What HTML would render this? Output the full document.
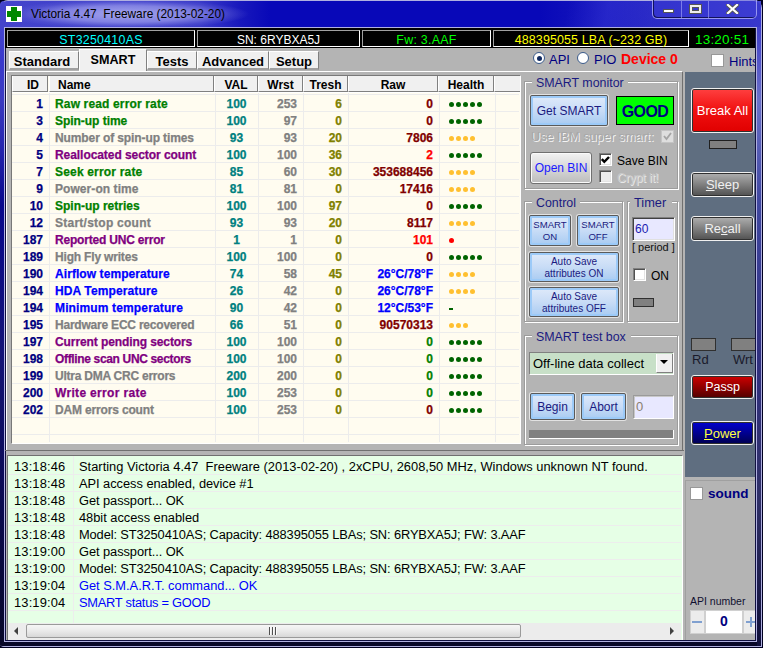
<!DOCTYPE html>
<html><head><meta charset="utf-8"><style>
html,body{margin:0;padding:0;}
body{width:763px;height:648px;overflow:hidden;position:relative;background:#000020;font-family:"Liberation Sans",sans-serif;}
div,svg{position:absolute;}
.t{white-space:nowrap;line-height:16px;}
.gb{font-weight:bold;font-size:12px;-webkit-text-stroke:0.25px currentColor;}
.frame{left:0;top:0;width:762px;height:647px;border-radius:8px 8px 0 4px;background:#b0b0e0;}
.lstrip{left:0;top:1px;width:4px;height:645px;border-radius:7px 0 0 3px;background:linear-gradient(#4a4ad0 0px,#3a3acc 60px,#3a3ac0 100px,#2828b0 144px,#08088c 204px,#141478 350px,#0a0a50 504px,#080828 645px);}
.rstrip{left:757px;top:1px;width:4px;height:645px;background:linear-gradient(#4646d0 0px,#4040c8 40px,#6a70c8 100px,#4048a0 200px,#303080 350px,#303068 500px,#10103a 645px);}
.bstrip{left:3px;top:642px;width:755px;height:4px;background:#080828;}
.tbar{left:0;top:1px;width:761px;height:26px;border-radius:7px 7px 0 0;background:linear-gradient(90deg,#4444cc 0px,#3a3ac8 200px,#1818bc 240px,#0808b8 270px,#0808b8 540px,#1414bc 590px,#2a2ac6 650px,#3838cc 761px);}
.glow{left:0;top:1px;width:300px;height:26px;background:radial-gradient(ellipse 122px 15px at 127px 13px, rgba(175,175,240,.9) 0%, rgba(145,145,232,.8) 55%, rgba(100,100,215,.35) 85%, rgba(90,90,210,0) 100%);}
.streak{left:0;top:1px;width:761px;height:26px;background:linear-gradient(100deg, rgba(0,0,0,0) 560px, rgba(60,60,220,.35) 600px, rgba(0,0,0,0) 650px);}
.capgrp{left:652px;top:-1px;width:105px;height:20px;border:1px solid rgba(190,190,255,.7);border-radius:0 0 5px 5px;box-sizing:border-box;background:rgba(70,70,220,.35);box-shadow:inset 1px -1px 0 rgba(10,10,60,.8);}
.radio{width:12px;height:12px;border-radius:50%;background:#fff;border:1px solid #3a5a8a;box-sizing:border-box;}
.radio .dot{left:2.5px;top:2.5px;width:5px;height:5px;border-radius:50%;background:#102a60;}
</style></head><body>
<div class="frame"></div>
<div class="lstrip"></div>
<div class="rstrip"></div>
<div class="bstrip"></div>
<div class="tbar"></div>
<div class="glow"></div>
<div class="streak"></div>
<div class="" style="left:6px;top:6px;width:16px;height:16px;background:#fff;"></div>
<div class="" style="left:11px;top:7px;width:6px;height:14px;background:#008800;"></div>
<div class="" style="left:7px;top:11px;width:14px;height:6px;background:#008800;"></div>
<div class="t" style="left:31px;top:6px;font-size:11.85px;color:#000;white-space:nowrap;">Victoria 4.47&nbsp; Freeware (2013-02-20)</div>
<div class="capgrp"></div>
<div class="" style="left:681px;top:1px;width:1px;height:17px;background:rgba(180,180,255,.55);"></div>
<div class="" style="left:708px;top:1px;width:1px;height:17px;background:rgba(180,180,255,.55);"></div>
<div class="" style="left:663px;top:9px;width:11px;height:4px;background:#fff;border:1px solid #555;box-sizing:border-box;"></div>
<div class="" style="left:690px;top:5px;width:11px;height:8px;border:2px solid #eee;box-shadow:0 0 0 1px #555, inset 0 0 0 1px #555;box-sizing:border-box;"></div>
<svg class="a" style="left:726px;top:4px" width="13" height="10" viewBox="0 0 13 10"><path d="M2 1 L11 9 M11 1 L2 9" stroke="#555" stroke-width="4" stroke-linecap="square"/><path d="M2 1 L11 9 M11 1 L2 9" stroke="#fff" stroke-width="2.2" stroke-linecap="square"/></svg>
<div class="" style="left:4px;top:27px;width:753px;height:615px;background:#b0b0e0;"></div>
<div class="" style="left:5px;top:28px;width:751px;height:613px;background:#101040;"></div>
<div class="" style="left:6px;top:29px;width:749px;height:611px;background:#b4b4b4;"></div>
<div class="" style="left:5px;top:28px;width:751px;height:20px;background:#000;"></div>
<div class="" style="left:7px;top:30px;width:188px;height:17px;background:#000;border-top:1px solid #a0a0a0;border-left:1px solid #a0a0a0;border-right:1px solid #fff;border-bottom:1px solid #fff;box-sizing:border-box;"></div>
<div class="" style="left:197px;top:30px;width:163px;height:17px;background:#000;border-top:1px solid #a0a0a0;border-left:1px solid #a0a0a0;border-right:1px solid #fff;border-bottom:1px solid #fff;box-sizing:border-box;"></div>
<div class="" style="left:362px;top:30px;width:129px;height:17px;background:#000;border-top:1px solid #a0a0a0;border-left:1px solid #a0a0a0;border-right:1px solid #fff;border-bottom:1px solid #fff;box-sizing:border-box;"></div>
<div class="" style="left:493px;top:30px;width:196px;height:17px;background:#000;border-top:1px solid #a0a0a0;border-left:1px solid #a0a0a0;border-right:1px solid #fff;border-bottom:1px solid #fff;box-sizing:border-box;"></div>
<div class="t" style="left:7px;top:32px;width:188px;text-align:center;color:#00ffff;font-size:12.4px;letter-spacing:0.25px;">ST3250410AS</div>
<div class="t" style="left:197px;top:32px;width:163px;text-align:center;color:#fff;font-size:12px;">SN: 6RYBXA5J</div>
<div class="t" style="left:362px;top:32px;width:129px;text-align:center;color:#00ff00;font-size:12.4px;letter-spacing:0.27px;">Fw: 3.AAF</div>
<div class="t" style="left:493px;top:32px;width:196px;text-align:center;color:#ffff00;font-size:12.5px;letter-spacing:0.09px;">488395055 LBA (~232 GB)</div>
<div class="t" style="left:695px;top:32px;color:#00ff00;font-size:13.5px;letter-spacing:0.2px;">13:20:51</div>
<div class="" style="left:9px;top:51px;width:70px;height:19px;background:#f0f0f0;border-left:1px solid #fff;border-top:1px solid #fff;border-right:1px solid #808080;box-sizing:border-box;border-bottom:2px solid #a0a0a0;"></div><div class="t" style="left:7px;top:54px;width:70px;text-align:center;font-weight:bold;font-size:13px;color:#000;">Standard</div>
<div class="" style="left:147px;top:51px;width:50px;height:19px;background:#f0f0f0;border-left:1px solid #fff;border-top:1px solid #fff;border-right:1px solid #808080;box-sizing:border-box;border-bottom:2px solid #a0a0a0;"></div><div class="t" style="left:147px;top:54px;width:50px;text-align:center;font-weight:bold;font-size:13px;color:#000;">Tests</div>
<div class="" style="left:197px;top:51px;width:72px;height:19px;background:#f0f0f0;border-left:1px solid #fff;border-top:1px solid #fff;border-right:1px solid #808080;box-sizing:border-box;border-bottom:2px solid #a0a0a0;"></div><div class="t" style="left:197px;top:54px;width:72px;text-align:center;font-weight:bold;font-size:13px;color:#000;">Advanced</div>
<div class="" style="left:269px;top:51px;width:50px;height:19px;background:#f0f0f0;border-left:1px solid #fff;border-top:1px solid #fff;border-right:1px solid #808080;box-sizing:border-box;border-bottom:2px solid #a0a0a0;"></div><div class="t" style="left:269px;top:54px;width:50px;text-align:center;font-weight:bold;font-size:13px;color:#000;">Setup</div>
<div class="" style="left:79px;top:49px;width:68px;height:23px;background:#f0f0f0;border-left:1px solid #fff;border-top:1px solid #fff;border-right:1px solid #808080;box-sizing:border-box;"></div><div class="t" style="left:79px;top:52px;width:68px;text-align:center;font-weight:bold;font-size:12.6px;color:#000;">SMART</div>
<div class="radio" style="left:533px;top:52px"><div class="dot"></div></div>
<div class="t" style="left:549px;top:52px;font-size:13px;color:#000080;">API</div>
<div class="radio" style="left:577px;top:52px"></div>
<div class="t" style="left:594px;top:52px;font-size:13px;color:#000080;">PIO</div>
<div class="t" style="left:621px;top:51px;font-size:14px;font-weight:bold;color:#ff0000;">Device 0</div>
<div class="" style="left:711px;top:54px;width:13px;height:13px;background:#fff;border:1px solid #989898;box-sizing:border-box;"></div>
<div class="t" style="left:729px;top:54px;font-size:13px;color:#000080;">Hints</div>
<div class="" style="left:6px;top:71px;width:677px;height:380px;border-top:1px solid #fff;border-left:1px solid #fff;border-right:1px solid #707070;border-bottom:1px solid #707070;box-sizing:border-box;"></div>
<div class="" style="left:11px;top:75px;width:510px;height:369px;background:#fffcf0;border-top:1px solid #787878;border-left:1px solid #787878;border-right:1px solid #fff;border-bottom:1px solid #fff;box-sizing:border-box;"></div>
<div class="" style="left:12px;top:76px;width:36px;height:16px;background:#f0f0f0;border-left:1px solid #fff;border-right:1px solid #808080;border-bottom:1px solid #808080;box-sizing:border-box;"></div>
<div class="" style="left:49px;top:76px;width:165px;height:16px;background:#f0f0f0;border-left:1px solid #fff;border-right:1px solid #808080;border-bottom:1px solid #808080;box-sizing:border-box;"></div>
<div class="" style="left:214px;top:76px;width:44px;height:16px;background:#f0f0f0;border-left:1px solid #fff;border-right:1px solid #808080;border-bottom:1px solid #808080;box-sizing:border-box;"></div>
<div class="" style="left:258px;top:76px;width:45px;height:16px;background:#f0f0f0;border-left:1px solid #fff;border-right:1px solid #808080;border-bottom:1px solid #808080;box-sizing:border-box;"></div>
<div class="" style="left:303px;top:76px;width:45px;height:16px;background:#f0f0f0;border-left:1px solid #fff;border-right:1px solid #808080;border-bottom:1px solid #808080;box-sizing:border-box;"></div>
<div class="" style="left:348px;top:76px;width:90px;height:16px;background:#f0f0f0;border-left:1px solid #fff;border-right:1px solid #808080;border-bottom:1px solid #808080;box-sizing:border-box;"></div>
<div class="" style="left:438px;top:76px;width:56px;height:16px;background:#f0f0f0;border-left:1px solid #fff;border-right:1px solid #808080;border-bottom:1px solid #808080;box-sizing:border-box;"></div>
<div class="" style="left:494px;top:76px;width:26px;height:16px;background:#f0f0f0;border-left:1px solid #fff;border-bottom:1px solid #808080;box-sizing:border-box;"></div>
<div class="" style="left:12px;top:92px;width:508px;height:1px;background:#fff;"></div>
<div class="" style="left:12px;top:94px;width:507px;height:1px;background:#ececec;"></div>
<div class="" style="left:12px;top:111px;width:507px;height:1px;background:#ececec;"></div>
<div class="" style="left:12px;top:128px;width:507px;height:1px;background:#ececec;"></div>
<div class="" style="left:12px;top:145px;width:507px;height:1px;background:#ececec;"></div>
<div class="" style="left:12px;top:162px;width:507px;height:1px;background:#ececec;"></div>
<div class="" style="left:12px;top:179px;width:507px;height:1px;background:#ececec;"></div>
<div class="" style="left:12px;top:196px;width:507px;height:1px;background:#ececec;"></div>
<div class="" style="left:12px;top:213px;width:507px;height:1px;background:#ececec;"></div>
<div class="" style="left:12px;top:230px;width:507px;height:1px;background:#ececec;"></div>
<div class="" style="left:12px;top:247px;width:507px;height:1px;background:#ececec;"></div>
<div class="" style="left:12px;top:264px;width:507px;height:1px;background:#ececec;"></div>
<div class="" style="left:12px;top:281px;width:507px;height:1px;background:#ececec;"></div>
<div class="" style="left:12px;top:298px;width:507px;height:1px;background:#ececec;"></div>
<div class="" style="left:12px;top:315px;width:507px;height:1px;background:#ececec;"></div>
<div class="" style="left:12px;top:332px;width:507px;height:1px;background:#ececec;"></div>
<div class="" style="left:12px;top:349px;width:507px;height:1px;background:#ececec;"></div>
<div class="" style="left:12px;top:366px;width:507px;height:1px;background:#ececec;"></div>
<div class="" style="left:12px;top:383px;width:507px;height:1px;background:#ececec;"></div>
<div class="" style="left:12px;top:400px;width:507px;height:1px;background:#ececec;"></div>
<div class="" style="left:12px;top:417px;width:507px;height:1px;background:#ececec;"></div>
<div class="" style="left:12px;top:434px;width:507px;height:1px;background:#ececec;"></div>
<div class="" style="left:49px;top:93px;width:1px;height:349px;background:#ececec;"></div>
<div class="" style="left:215px;top:93px;width:1px;height:349px;background:#ececec;"></div>
<div class="" style="left:258px;top:93px;width:1px;height:349px;background:#ececec;"></div>
<div class="" style="left:303px;top:93px;width:1px;height:349px;background:#ececec;"></div>
<div class="" style="left:348px;top:93px;width:1px;height:349px;background:#ececec;"></div>
<div class="" style="left:439px;top:93px;width:1px;height:349px;background:#ececec;"></div>
<div class="" style="left:495px;top:93px;width:1px;height:349px;background:#ececec;"></div>
<div class="t" style="left:12px;top:77px;width:27px;text-align:right;font-weight:bold;font-size:12px;">ID</div>
<div class="t" style="left:58px;top:77px;font-weight:bold;font-size:12px;">Name</div>
<div class="t" style="left:214px;top:77px;width:44px;text-align:center;font-weight:bold;font-size:12px;">VAL</div>
<div class="t" style="left:258px;top:77px;width:45px;text-align:center;font-weight:bold;font-size:12px;">Wrst</div>
<div class="t" style="left:303px;top:77px;width:45px;text-align:center;font-weight:bold;font-size:12px;">Tresh</div>
<div class="t" style="left:348px;top:77px;width:90px;text-align:center;font-weight:bold;font-size:12px;">Raw</div>
<div class="t" style="left:438px;top:77px;width:56px;text-align:center;font-weight:bold;font-size:12px;">Health</div>
<div class="t gb" style="left:12px;top:96px;width:31px;text-align:right;color:#000080;">1</div>
<div class="t gb" style="left:55px;top:96px;color:#008000;letter-spacing:0.15px;">Raw read error rate</div>
<div class="t gb" style="left:215px;top:96px;width:43px;text-align:center;color:#008080;">100</div>
<div class="t gb" style="left:258px;top:96px;width:39px;text-align:right;color:#808080;">253</div>
<div class="t gb" style="left:303px;top:96px;width:39px;text-align:right;color:#808000;">6</div>
<div class="t gb" style="left:348px;top:96px;width:85px;text-align:right;color:#800000;">0</div>
<div class="" style="left:449px;top:102px;width:5px;height:5px;background:#006400;border-radius:50%;"></div>
<div class="" style="left:456px;top:102px;width:5px;height:5px;background:#006400;border-radius:50%;"></div>
<div class="" style="left:463px;top:102px;width:5px;height:5px;background:#006400;border-radius:50%;"></div>
<div class="" style="left:470px;top:102px;width:5px;height:5px;background:#006400;border-radius:50%;"></div>
<div class="" style="left:477px;top:102px;width:5px;height:5px;background:#006400;border-radius:50%;"></div>
<div class="t gb" style="left:12px;top:113px;width:31px;text-align:right;color:#000080;">3</div>
<div class="t gb" style="left:55px;top:113px;color:#008000;letter-spacing:-0.036px;">Spin-up time</div>
<div class="t gb" style="left:215px;top:113px;width:43px;text-align:center;color:#008080;">100</div>
<div class="t gb" style="left:258px;top:113px;width:39px;text-align:right;color:#808080;">97</div>
<div class="t gb" style="left:303px;top:113px;width:39px;text-align:right;color:#808000;">0</div>
<div class="t gb" style="left:348px;top:113px;width:85px;text-align:right;color:#800000;">0</div>
<div class="" style="left:449px;top:119px;width:5px;height:5px;background:#006400;border-radius:50%;"></div>
<div class="" style="left:456px;top:119px;width:5px;height:5px;background:#006400;border-radius:50%;"></div>
<div class="" style="left:463px;top:119px;width:5px;height:5px;background:#006400;border-radius:50%;"></div>
<div class="" style="left:470px;top:119px;width:5px;height:5px;background:#006400;border-radius:50%;"></div>
<div class="" style="left:477px;top:119px;width:5px;height:5px;background:#006400;border-radius:50%;"></div>
<div class="t gb" style="left:12px;top:130px;width:31px;text-align:right;color:#000080;">4</div>
<div class="t gb" style="left:55px;top:130px;color:#808080;letter-spacing:-0.105px;">Number of spin-up times</div>
<div class="t gb" style="left:215px;top:130px;width:43px;text-align:center;color:#008080;">93</div>
<div class="t gb" style="left:258px;top:130px;width:39px;text-align:right;color:#808080;">93</div>
<div class="t gb" style="left:303px;top:130px;width:39px;text-align:right;color:#808000;">20</div>
<div class="t gb" style="left:348px;top:130px;width:85px;text-align:right;color:#800000;">7806</div>
<div class="" style="left:449px;top:136px;width:5px;height:5px;background:#ffc030;border-radius:50%;"></div>
<div class="" style="left:456px;top:136px;width:5px;height:5px;background:#ffc030;border-radius:50%;"></div>
<div class="" style="left:463px;top:136px;width:5px;height:5px;background:#ffc030;border-radius:50%;"></div>
<div class="" style="left:470px;top:136px;width:5px;height:5px;background:#ffc030;border-radius:50%;"></div>
<div class="t gb" style="left:12px;top:147px;width:31px;text-align:right;color:#000080;">5</div>
<div class="t gb" style="left:55px;top:147px;color:#800080;letter-spacing:-0.061px;">Reallocated sector count</div>
<div class="t gb" style="left:215px;top:147px;width:43px;text-align:center;color:#008080;">100</div>
<div class="t gb" style="left:258px;top:147px;width:39px;text-align:right;color:#808080;">100</div>
<div class="t gb" style="left:303px;top:147px;width:39px;text-align:right;color:#808000;">36</div>
<div class="t gb" style="left:348px;top:147px;width:85px;text-align:right;color:#ff0000;">2</div>
<div class="" style="left:449px;top:153px;width:5px;height:5px;background:#006400;border-radius:50%;"></div>
<div class="" style="left:456px;top:153px;width:5px;height:5px;background:#006400;border-radius:50%;"></div>
<div class="" style="left:463px;top:153px;width:5px;height:5px;background:#006400;border-radius:50%;"></div>
<div class="" style="left:470px;top:153px;width:5px;height:5px;background:#006400;border-radius:50%;"></div>
<div class="" style="left:477px;top:153px;width:5px;height:5px;background:#006400;border-radius:50%;"></div>
<div class="t gb" style="left:12px;top:164px;width:31px;text-align:right;color:#000080;">7</div>
<div class="t gb" style="left:55px;top:164px;color:#008000;letter-spacing:0.179px;">Seek error rate</div>
<div class="t gb" style="left:215px;top:164px;width:43px;text-align:center;color:#008080;">85</div>
<div class="t gb" style="left:258px;top:164px;width:39px;text-align:right;color:#808080;">60</div>
<div class="t gb" style="left:303px;top:164px;width:39px;text-align:right;color:#808000;">30</div>
<div class="t gb" style="left:348px;top:164px;width:85px;text-align:right;color:#800000;">353688456</div>
<div class="" style="left:449px;top:170px;width:5px;height:5px;background:#ffc030;border-radius:50%;"></div>
<div class="" style="left:456px;top:170px;width:5px;height:5px;background:#ffc030;border-radius:50%;"></div>
<div class="" style="left:463px;top:170px;width:5px;height:5px;background:#ffc030;border-radius:50%;"></div>
<div class="" style="left:470px;top:170px;width:5px;height:5px;background:#ffc030;border-radius:50%;"></div>
<div class="t gb" style="left:12px;top:181px;width:31px;text-align:right;color:#000080;">9</div>
<div class="t gb" style="left:55px;top:181px;color:#808080;letter-spacing:0.067px;">Power-on time</div>
<div class="t gb" style="left:215px;top:181px;width:43px;text-align:center;color:#008080;">81</div>
<div class="t gb" style="left:258px;top:181px;width:39px;text-align:right;color:#808080;">81</div>
<div class="t gb" style="left:303px;top:181px;width:39px;text-align:right;color:#808000;">0</div>
<div class="t gb" style="left:348px;top:181px;width:85px;text-align:right;color:#800000;">17416</div>
<div class="" style="left:449px;top:187px;width:5px;height:5px;background:#ffc030;border-radius:50%;"></div>
<div class="" style="left:456px;top:187px;width:5px;height:5px;background:#ffc030;border-radius:50%;"></div>
<div class="" style="left:463px;top:187px;width:5px;height:5px;background:#ffc030;border-radius:50%;"></div>
<div class="" style="left:470px;top:187px;width:5px;height:5px;background:#ffc030;border-radius:50%;"></div>
<div class="t gb" style="left:12px;top:198px;width:31px;text-align:right;color:#000080;">10</div>
<div class="t gb" style="left:55px;top:198px;color:#008000;letter-spacing:-0.007px;">Spin-up retries</div>
<div class="t gb" style="left:215px;top:198px;width:43px;text-align:center;color:#008080;">100</div>
<div class="t gb" style="left:258px;top:198px;width:39px;text-align:right;color:#808080;">100</div>
<div class="t gb" style="left:303px;top:198px;width:39px;text-align:right;color:#808000;">97</div>
<div class="t gb" style="left:348px;top:198px;width:85px;text-align:right;color:#800000;">0</div>
<div class="" style="left:449px;top:204px;width:5px;height:5px;background:#006400;border-radius:50%;"></div>
<div class="" style="left:456px;top:204px;width:5px;height:5px;background:#006400;border-radius:50%;"></div>
<div class="" style="left:463px;top:204px;width:5px;height:5px;background:#006400;border-radius:50%;"></div>
<div class="" style="left:470px;top:204px;width:5px;height:5px;background:#006400;border-radius:50%;"></div>
<div class="" style="left:477px;top:204px;width:5px;height:5px;background:#006400;border-radius:50%;"></div>
<div class="t gb" style="left:12px;top:215px;width:31px;text-align:right;color:#000080;">12</div>
<div class="t gb" style="left:55px;top:215px;color:#808080;letter-spacing:0.247px;">Start/stop count</div>
<div class="t gb" style="left:215px;top:215px;width:43px;text-align:center;color:#008080;">93</div>
<div class="t gb" style="left:258px;top:215px;width:39px;text-align:right;color:#808080;">93</div>
<div class="t gb" style="left:303px;top:215px;width:39px;text-align:right;color:#808000;">20</div>
<div class="t gb" style="left:348px;top:215px;width:85px;text-align:right;color:#800000;">8117</div>
<div class="" style="left:449px;top:221px;width:5px;height:5px;background:#ffc030;border-radius:50%;"></div>
<div class="" style="left:456px;top:221px;width:5px;height:5px;background:#ffc030;border-radius:50%;"></div>
<div class="" style="left:463px;top:221px;width:5px;height:5px;background:#ffc030;border-radius:50%;"></div>
<div class="" style="left:470px;top:221px;width:5px;height:5px;background:#ffc030;border-radius:50%;"></div>
<div class="t gb" style="left:12px;top:232px;width:31px;text-align:right;color:#000080;">187</div>
<div class="t gb" style="left:55px;top:232px;color:#800080;letter-spacing:-0.2px;">Reported UNC error</div>
<div class="t gb" style="left:215px;top:232px;width:43px;text-align:center;color:#008080;">1</div>
<div class="t gb" style="left:258px;top:232px;width:39px;text-align:right;color:#808080;">1</div>
<div class="t gb" style="left:303px;top:232px;width:39px;text-align:right;color:#808000;">0</div>
<div class="t gb" style="left:348px;top:232px;width:85px;text-align:right;color:#ff0000;">101</div>
<div class="" style="left:449px;top:238px;width:5px;height:5px;background:#ff0000;border-radius:50%;"></div>
<div class="t gb" style="left:12px;top:249px;width:31px;text-align:right;color:#000080;">189</div>
<div class="t gb" style="left:55px;top:249px;color:#808080;letter-spacing:-0.179px;">High Fly writes</div>
<div class="t gb" style="left:215px;top:249px;width:43px;text-align:center;color:#008080;">100</div>
<div class="t gb" style="left:258px;top:249px;width:39px;text-align:right;color:#808080;">100</div>
<div class="t gb" style="left:303px;top:249px;width:39px;text-align:right;color:#808000;">0</div>
<div class="t gb" style="left:348px;top:249px;width:85px;text-align:right;color:#800000;">0</div>
<div class="" style="left:449px;top:255px;width:5px;height:5px;background:#006400;border-radius:50%;"></div>
<div class="" style="left:456px;top:255px;width:5px;height:5px;background:#006400;border-radius:50%;"></div>
<div class="" style="left:463px;top:255px;width:5px;height:5px;background:#006400;border-radius:50%;"></div>
<div class="" style="left:470px;top:255px;width:5px;height:5px;background:#006400;border-radius:50%;"></div>
<div class="" style="left:477px;top:255px;width:5px;height:5px;background:#006400;border-radius:50%;"></div>
<div class="t gb" style="left:12px;top:266px;width:31px;text-align:right;color:#000080;">190</div>
<div class="t gb" style="left:55px;top:266px;color:#0000ff;letter-spacing:0.072px;">Airflow temperature</div>
<div class="t gb" style="left:215px;top:266px;width:43px;text-align:center;color:#008080;">74</div>
<div class="t gb" style="left:258px;top:266px;width:39px;text-align:right;color:#808080;">58</div>
<div class="t gb" style="left:303px;top:266px;width:39px;text-align:right;color:#808000;">45</div>
<div class="t gb" style="left:348px;top:266px;width:85px;text-align:right;color:#0000ff;">26&deg;C/78&deg;F</div>
<div class="" style="left:449px;top:272px;width:5px;height:5px;background:#ffc030;border-radius:50%;"></div>
<div class="" style="left:456px;top:272px;width:5px;height:5px;background:#ffc030;border-radius:50%;"></div>
<div class="" style="left:463px;top:272px;width:5px;height:5px;background:#ffc030;border-radius:50%;"></div>
<div class="" style="left:470px;top:272px;width:5px;height:5px;background:#ffc030;border-radius:50%;"></div>
<div class="t gb" style="left:12px;top:283px;width:31px;text-align:right;color:#000080;">194</div>
<div class="t gb" style="left:55px;top:283px;color:#0000ff;letter-spacing:0.121px;">HDA Temperature</div>
<div class="t gb" style="left:215px;top:283px;width:43px;text-align:center;color:#008080;">26</div>
<div class="t gb" style="left:258px;top:283px;width:39px;text-align:right;color:#808080;">42</div>
<div class="t gb" style="left:303px;top:283px;width:39px;text-align:right;color:#808000;">0</div>
<div class="t gb" style="left:348px;top:283px;width:85px;text-align:right;color:#0000ff;">26&deg;C/78&deg;F</div>
<div class="" style="left:449px;top:289px;width:5px;height:5px;background:#ffc030;border-radius:50%;"></div>
<div class="" style="left:456px;top:289px;width:5px;height:5px;background:#ffc030;border-radius:50%;"></div>
<div class="" style="left:463px;top:289px;width:5px;height:5px;background:#ffc030;border-radius:50%;"></div>
<div class="" style="left:470px;top:289px;width:5px;height:5px;background:#ffc030;border-radius:50%;"></div>
<div class="t gb" style="left:12px;top:300px;width:31px;text-align:right;color:#000080;">194</div>
<div class="t gb" style="left:55px;top:300px;color:#0000ff;letter-spacing:0.139px;">Minimum temperature</div>
<div class="t gb" style="left:215px;top:300px;width:43px;text-align:center;color:#008080;">90</div>
<div class="t gb" style="left:258px;top:300px;width:39px;text-align:right;color:#808080;">42</div>
<div class="t gb" style="left:303px;top:300px;width:39px;text-align:right;color:#808000;">0</div>
<div class="t gb" style="left:348px;top:300px;width:85px;text-align:right;color:#0000ff;">12&deg;C/53&deg;F</div>
<div class="" style="left:449px;top:308px;width:4px;height:1.5px;background:#006400;"></div>
<div class="t gb" style="left:12px;top:317px;width:31px;text-align:right;color:#000080;">195</div>
<div class="t gb" style="left:55px;top:317px;color:#808080;letter-spacing:-0.214px;">Hardware ECC recovered</div>
<div class="t gb" style="left:215px;top:317px;width:43px;text-align:center;color:#008080;">66</div>
<div class="t gb" style="left:258px;top:317px;width:39px;text-align:right;color:#808080;">51</div>
<div class="t gb" style="left:303px;top:317px;width:39px;text-align:right;color:#808000;">0</div>
<div class="t gb" style="left:348px;top:317px;width:85px;text-align:right;color:#800000;">90570313</div>
<div class="" style="left:449px;top:323px;width:5px;height:5px;background:#ffc030;border-radius:50%;"></div>
<div class="" style="left:456px;top:323px;width:5px;height:5px;background:#ffc030;border-radius:50%;"></div>
<div class="" style="left:463px;top:323px;width:5px;height:5px;background:#ffc030;border-radius:50%;"></div>
<div class="t gb" style="left:12px;top:334px;width:31px;text-align:right;color:#000080;">197</div>
<div class="t gb" style="left:55px;top:334px;color:#800080;letter-spacing:-0.095px;">Current pending sectors</div>
<div class="t gb" style="left:215px;top:334px;width:43px;text-align:center;color:#008080;">100</div>
<div class="t gb" style="left:258px;top:334px;width:39px;text-align:right;color:#808080;">100</div>
<div class="t gb" style="left:303px;top:334px;width:39px;text-align:right;color:#808000;">0</div>
<div class="t gb" style="left:348px;top:334px;width:85px;text-align:right;color:#008000;">0</div>
<div class="" style="left:449px;top:340px;width:5px;height:5px;background:#006400;border-radius:50%;"></div>
<div class="" style="left:456px;top:340px;width:5px;height:5px;background:#006400;border-radius:50%;"></div>
<div class="" style="left:463px;top:340px;width:5px;height:5px;background:#006400;border-radius:50%;"></div>
<div class="" style="left:470px;top:340px;width:5px;height:5px;background:#006400;border-radius:50%;"></div>
<div class="" style="left:477px;top:340px;width:5px;height:5px;background:#006400;border-radius:50%;"></div>
<div class="t gb" style="left:12px;top:351px;width:31px;text-align:right;color:#000080;">198</div>
<div class="t gb" style="left:55px;top:351px;color:#800080;letter-spacing:-0.343px;">Offline scan UNC sectors</div>
<div class="t gb" style="left:215px;top:351px;width:43px;text-align:center;color:#008080;">100</div>
<div class="t gb" style="left:258px;top:351px;width:39px;text-align:right;color:#808080;">100</div>
<div class="t gb" style="left:303px;top:351px;width:39px;text-align:right;color:#808000;">0</div>
<div class="t gb" style="left:348px;top:351px;width:85px;text-align:right;color:#008000;">0</div>
<div class="" style="left:449px;top:357px;width:5px;height:5px;background:#006400;border-radius:50%;"></div>
<div class="" style="left:456px;top:357px;width:5px;height:5px;background:#006400;border-radius:50%;"></div>
<div class="" style="left:463px;top:357px;width:5px;height:5px;background:#006400;border-radius:50%;"></div>
<div class="" style="left:470px;top:357px;width:5px;height:5px;background:#006400;border-radius:50%;"></div>
<div class="" style="left:477px;top:357px;width:5px;height:5px;background:#006400;border-radius:50%;"></div>
<div class="t gb" style="left:12px;top:368px;width:31px;text-align:right;color:#000080;">199</div>
<div class="t gb" style="left:55px;top:368px;color:#808080;letter-spacing:-0.232px;">Ultra DMA CRC errors</div>
<div class="t gb" style="left:215px;top:368px;width:43px;text-align:center;color:#008080;">200</div>
<div class="t gb" style="left:258px;top:368px;width:39px;text-align:right;color:#808080;">200</div>
<div class="t gb" style="left:303px;top:368px;width:39px;text-align:right;color:#808000;">0</div>
<div class="t gb" style="left:348px;top:368px;width:85px;text-align:right;color:#008000;">0</div>
<div class="" style="left:449px;top:374px;width:5px;height:5px;background:#006400;border-radius:50%;"></div>
<div class="" style="left:456px;top:374px;width:5px;height:5px;background:#006400;border-radius:50%;"></div>
<div class="" style="left:463px;top:374px;width:5px;height:5px;background:#006400;border-radius:50%;"></div>
<div class="" style="left:470px;top:374px;width:5px;height:5px;background:#006400;border-radius:50%;"></div>
<div class="" style="left:477px;top:374px;width:5px;height:5px;background:#006400;border-radius:50%;"></div>
<div class="t gb" style="left:12px;top:385px;width:31px;text-align:right;color:#000080;">200</div>
<div class="t gb" style="left:55px;top:385px;color:#800080;letter-spacing:0.327px;">Write error rate</div>
<div class="t gb" style="left:215px;top:385px;width:43px;text-align:center;color:#008080;">100</div>
<div class="t gb" style="left:258px;top:385px;width:39px;text-align:right;color:#808080;">253</div>
<div class="t gb" style="left:303px;top:385px;width:39px;text-align:right;color:#808000;">0</div>
<div class="t gb" style="left:348px;top:385px;width:85px;text-align:right;color:#008000;">0</div>
<div class="" style="left:449px;top:391px;width:5px;height:5px;background:#006400;border-radius:50%;"></div>
<div class="" style="left:456px;top:391px;width:5px;height:5px;background:#006400;border-radius:50%;"></div>
<div class="" style="left:463px;top:391px;width:5px;height:5px;background:#006400;border-radius:50%;"></div>
<div class="" style="left:470px;top:391px;width:5px;height:5px;background:#006400;border-radius:50%;"></div>
<div class="" style="left:477px;top:391px;width:5px;height:5px;background:#006400;border-radius:50%;"></div>
<div class="t gb" style="left:12px;top:402px;width:31px;text-align:right;color:#000080;">202</div>
<div class="t gb" style="left:55px;top:402px;color:#808080;letter-spacing:-0.16px;">DAM errors count</div>
<div class="t gb" style="left:215px;top:402px;width:43px;text-align:center;color:#008080;">100</div>
<div class="t gb" style="left:258px;top:402px;width:39px;text-align:right;color:#808080;">253</div>
<div class="t gb" style="left:303px;top:402px;width:39px;text-align:right;color:#808000;">0</div>
<div class="t gb" style="left:348px;top:402px;width:85px;text-align:right;color:#800000;">0</div>
<div class="" style="left:449px;top:408px;width:5px;height:5px;background:#006400;border-radius:50%;"></div>
<div class="" style="left:456px;top:408px;width:5px;height:5px;background:#006400;border-radius:50%;"></div>
<div class="" style="left:463px;top:408px;width:5px;height:5px;background:#006400;border-radius:50%;"></div>
<div class="" style="left:470px;top:408px;width:5px;height:5px;background:#006400;border-radius:50%;"></div>
<div class="" style="left:477px;top:408px;width:5px;height:5px;background:#006400;border-radius:50%;"></div>
<div class="" style="left:524px;top:81px;width:154px;height:108px;border:1px solid #9c9c9c;box-shadow:inset 1px 1px 0 #fff, 1px 1px 0 #fff;box-sizing:border-box;"></div><div class="" style="left:532px;top:73px;width:96px;height:16px;background:#b4b4b4;"></div><div class="t" style="left:536px;top:75px;font-size:12.4px;color:#1a1a80;white-space:nowrap;">SMART monitor</div>
<div class="" style="left:524px;top:201px;width:99px;height:121px;border:1px solid #9c9c9c;box-shadow:inset 1px 1px 0 #fff, 1px 1px 0 #fff;box-sizing:border-box;"></div><div class="" style="left:532px;top:193px;width:48px;height:16px;background:#b4b4b4;"></div><div class="t" style="left:536px;top:195px;font-size:12.4px;color:#1a1a80;white-space:nowrap;">Control</div>
<div class="" style="left:627px;top:201px;width:51px;height:121px;border:1px solid #9c9c9c;box-shadow:inset 1px 1px 0 #fff, 1px 1px 0 #fff;box-sizing:border-box;"></div><div class="" style="left:630px;top:193px;width:42px;height:16px;background:#b4b4b4;"></div><div class="t" style="left:634px;top:195px;font-size:12.8px;color:#1a1a80;white-space:nowrap;">Timer</div>
<div class="" style="left:524px;top:335px;width:154px;height:110px;border:1px solid #9c9c9c;box-shadow:inset 1px 1px 0 #fff, 1px 1px 0 #fff;box-sizing:border-box;"></div><div class="" style="left:532px;top:327px;width:99px;height:16px;background:#b4b4b4;"></div><div class="t" style="left:536px;top:329px;font-size:12.4px;color:#1a1a80;white-space:nowrap;">SMART test box</div>
<div class="a" style="left:530px;top:95px;width:78px;height:31px;background:linear-gradient(#dfeafa,#c8dcf6 50%,#a8cbf2);border:1px solid #5a5a5a;border-radius:2px;box-shadow:0 0 0 1px #e2e2e2, inset 0 0 0 2px #9ccaf8;box-sizing:border-box;"><div style="position:absolute;left:0;right:0;top:1px;bottom:0;display:flex;align-items:center;justify-content:center;text-align:center;font-size:12px;color:#1a1a80;line-height:29px;">Get SMART</div></div>
<div class="" style="left:616px;top:96px;width:58px;height:29px;background:#00ff00;border:1px solid #000;box-sizing:border-box;"></div>
<div class="t" style="left:616px;top:104px;width:58px;text-align:center;font-weight:bold;font-size:16px;letter-spacing:-0.6px;color:#000080;">GOOD</div>
<div class="t" style="left:531px;top:129px;font-size:12.7px;color:#d8d8d8;text-shadow:1px 1px 0 #f4f4f4;color:#a8a8a8;">Use IBM super smart:</div>
<div class="" style="left:661px;top:130px;width:13px;height:13px;background:#dedede;border:1px solid #c4c4c4;box-sizing:border-box;"></div>
<svg class="a" style="left:662px;top:131px" width="11" height="11"><path d="M2 5 L4.5 8 L9 2" stroke="#a4a4a4" stroke-width="1.8" fill="none"/></svg>
<div class="" style="left:530px;top:152px;width:62px;height:32px;background:linear-gradient(#f2f2f2,#d8d8d8 50%,#bcbcbc);border:1px solid #707070;border-radius:3px;box-shadow:inset 0 0 0 1px #fafafa;box-sizing:border-box;"></div>
<div class="t" style="left:530px;top:160px;width:62px;text-align:center;font-size:12px;color:#1a1aff;">Open BIN</div>
<div class="" style="left:599px;top:153px;width:13px;height:13px;background:#fff;border-top:1px solid #808080;border-left:1px solid #808080;border-right:1px solid #fff;border-bottom:1px solid #fff;box-shadow:inset 1px 1px 0 #505050, inset -1px -1px 0 #e4e4e4;box-sizing:border-box;"></div>
<svg class="a" style="left:600px;top:155px" width="11" height="10"><path d="M1.8 4.2 L4.3 6.8 L9 2" stroke="#000" stroke-width="2.5" fill="none"/></svg>
<div class="t" style="left:617px;top:153px;font-size:12px;color:#000;">Save BIN</div>
<div class="" style="left:599px;top:170px;width:13px;height:13px;background:#ececec;border-top:1px solid #808080;border-left:1px solid #808080;border-right:1px solid #fff;border-bottom:1px solid #fff;box-shadow:inset 1px 1px 0 #505050, inset -1px -1px 0 #e4e4e4;box-sizing:border-box;"></div>
<div class="t" style="left:617px;top:170px;font-size:12px;color:#c8c8c8;text-shadow:1px 1px 0 #e8e8e8;">Crypt it!</div>
<div class="a" style="left:529px;top:215px;width:42px;height:31px;background:linear-gradient(#dfeafa,#c8dcf6 50%,#a8cbf2);border:1px solid #5a5a5a;border-radius:2px;box-shadow:0 0 0 1px #e2e2e2, inset 0 0 0 2px #9ccaf8;box-sizing:border-box;"><div style="position:absolute;left:0;right:0;top:1px;bottom:0;display:flex;align-items:center;justify-content:center;text-align:center;font-size:9.6px;color:#1a1a80;line-height:12px;">SMART<br>ON</div></div>
<div class="a" style="left:577px;top:215px;width:42px;height:31px;background:linear-gradient(#dfeafa,#c8dcf6 50%,#a8cbf2);border:1px solid #5a5a5a;border-radius:2px;box-shadow:0 0 0 1px #e2e2e2, inset 0 0 0 2px #9ccaf8;box-sizing:border-box;"><div style="position:absolute;left:0;right:0;top:1px;bottom:0;display:flex;align-items:center;justify-content:center;text-align:center;font-size:9.6px;color:#1a1a80;line-height:12px;">SMART<br>OFF</div></div>
<div class="a" style="left:529px;top:252px;width:90px;height:30px;background:linear-gradient(#dfeafa,#c8dcf6 50%,#a8cbf2);border:1px solid #5a5a5a;border-radius:2px;box-shadow:0 0 0 1px #e2e2e2, inset 0 0 0 2px #9ccaf8;box-sizing:border-box;"><div style="position:absolute;left:0;right:0;top:1px;bottom:0;display:flex;align-items:center;justify-content:center;text-align:center;font-size:10px;color:#1a1a80;line-height:12px;">Auto Save<br>attributes ON</div></div>
<div class="a" style="left:529px;top:287px;width:90px;height:30px;background:linear-gradient(#dfeafa,#c8dcf6 50%,#a8cbf2);border:1px solid #5a5a5a;border-radius:2px;box-shadow:0 0 0 1px #e2e2e2, inset 0 0 0 2px #9ccaf8;box-sizing:border-box;"><div style="position:absolute;left:0;right:0;top:1px;bottom:0;display:flex;align-items:center;justify-content:center;text-align:center;font-size:10px;color:#1a1a80;line-height:12px;">Auto Save<br>attributes OFF</div></div>
<div class="" style="left:632px;top:217px;width:43px;height:24px;background:#e8e8ff;border-top:1px solid #808080;border-left:1px solid #808080;border-right:1px solid #fff;border-bottom:1px solid #fff;box-shadow:inset 1px 1px 0 #404040, inset -1px -1px 0 #e0e0e0;box-sizing:border-box;"></div>
<div class="t" style="left:635px;top:221px;font-size:12px;color:#1a1ab0;">60</div>
<div class="t" style="left:632px;top:239px;font-size:11px;color:#101010;">[ period ]</div>
<div class="" style="left:633px;top:268px;width:13px;height:13px;background:#fff;border-top:1px solid #808080;border-left:1px solid #808080;border-right:1px solid #fff;border-bottom:1px solid #fff;box-shadow:inset 1px 1px 0 #505050, inset -1px -1px 0 #e4e4e4;box-sizing:border-box;"></div>
<div class="t" style="left:651px;top:268px;font-size:12px;color:#000;">ON</div>
<div class="" style="left:633px;top:298px;width:21px;height:9px;background:#808080;border:1px solid #303030;box-sizing:border-box;"></div>
<div class="" style="left:529px;top:352px;width:145px;height:23px;background:#c8e0c8;border-top:1px solid #808080;border-left:1px solid #808080;border-right:1px solid #fff;border-bottom:1px solid #fff;box-sizing:border-box;"></div>
<div class="" style="left:656px;top:354px;width:17px;height:19px;background:#f0f0f0;border-left:1px solid #fff;border-right:1px solid #808080;border-bottom:1px solid #808080;box-sizing:border-box;"></div>
<svg class="a" style="left:660px;top:360px" width="9" height="6"><path d="M0 0 L8 0 L4 4Z" fill="#000"/></svg>
<div class="t" style="left:533px;top:356px;font-size:13px;color:#000;">Off-line data collect</div>
<div class="a" style="left:530px;top:393px;width:45px;height:27px;background:linear-gradient(#dfeafa,#c8dcf6 50%,#a8cbf2);border:1px solid #5a5a5a;border-radius:2px;box-shadow:0 0 0 1px #e2e2e2, inset 0 0 0 2px #9ccaf8;box-sizing:border-box;"><div style="position:absolute;left:0;right:0;top:1px;bottom:0;display:flex;align-items:center;justify-content:center;text-align:center;font-size:12px;color:#1a1a80;line-height:25px;">Begin</div></div>
<div class="a" style="left:581px;top:393px;width:45px;height:27px;background:linear-gradient(#dfeafa,#c8dcf6 50%,#a8cbf2);border:1px solid #5a5a5a;border-radius:2px;box-shadow:0 0 0 1px #e2e2e2, inset 0 0 0 2px #9ccaf8;box-sizing:border-box;"><div style="position:absolute;left:0;right:0;top:1px;bottom:0;display:flex;align-items:center;justify-content:center;text-align:center;font-size:12px;color:#1a1a80;line-height:25px;">Abort</div></div>
<div class="" style="left:633px;top:395px;width:41px;height:24px;background:#e8e8ff;border-top:1px solid #9a9a9a;border-left:1px solid #9a9a9a;border-right:1px solid #fff;border-bottom:1px solid #fff;box-shadow:inset 1px 1px 0 #c8c8c8;box-sizing:border-box;"></div>
<div class="t" style="left:636px;top:399px;font-size:13px;color:#8a8070;">0</div>
<div class="" style="left:529px;top:430px;width:145px;height:9px;background:#808080;border-bottom:1px solid #fff;border-right:1px solid #fff;box-sizing:border-box;"></div>
<div class="" style="left:685px;top:72px;width:70px;height:405px;background:#5f6e80;"></div>
<div class="a" style="left:691px;top:88px;width:63px;height:45px;background:linear-gradient(#ff4040,#f01010 50%,#e00000);border:1px solid #f0f0f0;border-radius:3px;box-shadow:inset 0 0 0 1px #303030;box-sizing:border-box;"><div style="position:absolute;left:0;right:0;top:0;bottom:0;display:flex;align-items:center;justify-content:center;font-size:13px;color:#fff;">Break All</div></div>
<div class="" style="left:709px;top:140px;width:28px;height:9px;background:#808080;border:1px solid #202020;box-sizing:border-box;"></div>
<div class="a" style="left:691px;top:172px;width:63px;height:25px;background:linear-gradient(#b0b0b0,#808080 50%,#505050);border:1px solid #f0f0f0;border-radius:3px;box-shadow:inset 0 0 0 1px #303030;box-sizing:border-box;"><div style="position:absolute;left:0;right:0;top:0;bottom:0;display:flex;align-items:center;justify-content:center;font-size:13px;color:#f0f0f0;"><u>S</u>leep</div></div>
<div class="a" style="left:691px;top:216px;width:63px;height:25px;background:linear-gradient(#b0b0b0,#808080 50%,#505050);border:1px solid #f0f0f0;border-radius:3px;box-shadow:inset 0 0 0 1px #303030;box-sizing:border-box;"><div style="position:absolute;left:0;right:0;top:0;bottom:0;display:flex;align-items:center;justify-content:center;font-size:13px;color:#f0f0f0;">Re<u>c</u>all</div></div>
<div class="" style="left:691px;top:338px;width:25px;height:13px;background:#808080;border:1px solid #303030;box-sizing:border-box;"></div>
<div class="" style="left:731px;top:338px;width:26px;height:13px;background:#808080;border:1px solid #303030;box-sizing:border-box;"></div>
<div class="" style="left:755px;top:72px;width:1px;height:405px;background:#1a1a40;"></div>
<div class="t" style="left:692px;top:352px;font-size:13px;color:#1a1a2a;">Rd</div>
<div class="t" style="left:733px;top:352px;font-size:13px;color:#1a1a2a;">Wrt</div>
<div class="a" style="left:691px;top:375px;width:63px;height:24px;background:linear-gradient(#d00000,#900000 50%,#500000);border:1px solid #f0f0f0;border-radius:3px;box-shadow:inset 0 0 0 1px #303030;box-sizing:border-box;"><div style="position:absolute;left:0;right:0;top:0;bottom:0;display:flex;align-items:center;justify-content:center;font-size:12.5px;color:#fff;">Passp</div></div>
<div class="a" style="left:691px;top:421px;width:63px;height:24px;background:linear-gradient(#0000d0,#000090 50%,#000050);border:1px solid #f0f0f0;border-radius:3px;box-shadow:inset 0 0 0 1px #303030;box-sizing:border-box;"><div style="position:absolute;left:0;right:0;top:0;bottom:0;display:flex;align-items:center;justify-content:center;font-size:13px;color:#ffff40;"><u>P</u>ower</div></div>
<div class="" style="left:685px;top:480px;width:70px;height:160px;background:#b4b4b4;border-top:1px solid #a0a0a0;border-left:1px solid #a0a0a0;box-sizing:border-box;"></div>
<div class="" style="left:690px;top:487px;width:13px;height:13px;background:#fff;border:1px solid #989898;box-sizing:border-box;"></div>
<div class="t" style="left:708px;top:486px;font-size:13.5px;font-weight:bold;color:#000080;">sound</div>
<div class="t" style="left:690px;top:593px;font-size:10.5px;color:#101030;">API number</div>
<div class="" style="left:690px;top:610px;width:15px;height:24px;background:#ececec;border:1px solid #d0d0d0;box-sizing:border-box;"></div>
<div class="" style="left:705px;top:610px;width:38px;height:24px;background:#fff;border:1px solid #d0d0d0;box-sizing:border-box;"></div>
<div class="" style="left:743px;top:610px;width:12px;height:24px;background:#ececec;border:1px solid #d0d0d0;border-right:none;box-sizing:border-box;"></div>
<div class="" style="left:692px;top:621px;width:10px;height:2px;background:#80a0d0;"></div>
<div class="" style="left:746px;top:621px;width:9px;height:2px;background:#80a0d0;"></div>
<div class="" style="left:750px;top:617px;width:2px;height:10px;background:#80a0d0;"></div>
<div class="t" style="left:705px;top:613px;width:38px;text-align:center;font-size:14px;font-weight:bold;color:#000080;">0</div>
<div class="" style="left:5px;top:450px;width:679px;height:1px;background:#707070;"></div>
<div class="" style="left:7px;top:455px;width:676px;height:185px;background:#e6ffe6;border-top:1px solid #707070;border-left:1px solid #707070;border-right:1px solid #fff;box-sizing:border-box;"></div>
<div class="" style="left:8px;top:474px;width:673px;height:1px;background:#ededed;"></div>
<div class="" style="left:8px;top:491px;width:673px;height:1px;background:#ededed;"></div>
<div class="" style="left:8px;top:508px;width:673px;height:1px;background:#ededed;"></div>
<div class="" style="left:8px;top:525px;width:673px;height:1px;background:#ededed;"></div>
<div class="" style="left:8px;top:542px;width:673px;height:1px;background:#ededed;"></div>
<div class="" style="left:8px;top:559px;width:673px;height:1px;background:#ededed;"></div>
<div class="" style="left:8px;top:576px;width:673px;height:1px;background:#ededed;"></div>
<div class="" style="left:8px;top:593px;width:673px;height:1px;background:#ededed;"></div>
<div class="" style="left:8px;top:610px;width:673px;height:1px;background:#ededed;"></div>
<div class="" style="left:73px;top:456px;width:1px;height:167px;background:#ededed;"></div>
<div class="t" style="left:14px;top:459px;font-size:12.9px;letter-spacing:0.15px;color:#000;">13:18:46</div>
<div class="t" style="left:79px;top:459px;font-size:12.85px;letter-spacing:0.018px;color:#000;white-space:nowrap;">Starting Victoria 4.47&nbsp; Freeware (2013-02-20) , 2xCPU, 2608,50 MHz, Windows unknown NT found.</div>
<div class="t" style="left:14px;top:476px;font-size:12.9px;letter-spacing:0.15px;color:#000;">13:18:48</div>
<div class="t" style="left:79px;top:476px;font-size:12.85px;letter-spacing:-0.039px;color:#000;white-space:nowrap;">API access enabled, device #1</div>
<div class="t" style="left:14px;top:493px;font-size:12.9px;letter-spacing:0.15px;color:#000;">13:18:48</div>
<div class="t" style="left:79px;top:493px;font-size:12.85px;letter-spacing:-0.071px;color:#000;white-space:nowrap;">Get passport... OK</div>
<div class="t" style="left:14px;top:510px;font-size:12.9px;letter-spacing:0.15px;color:#000;">13:18:48</div>
<div class="t" style="left:79px;top:510px;font-size:12.85px;letter-spacing:-0.026px;color:#000;white-space:nowrap;">48bit access enabled</div>
<div class="t" style="left:14px;top:527px;font-size:12.9px;letter-spacing:0.15px;color:#000;">13:18:48</div>
<div class="t" style="left:79px;top:527px;font-size:12.85px;letter-spacing:-0.113px;color:#000;white-space:nowrap;">Model: ST3250410AS; Capacity: 488395055 LBAs; SN: 6RYBXA5J; FW: 3.AAF</div>
<div class="t" style="left:14px;top:544px;font-size:12.9px;letter-spacing:0.15px;color:#000;">13:19:00</div>
<div class="t" style="left:79px;top:544px;font-size:12.85px;letter-spacing:-0.071px;color:#000;white-space:nowrap;">Get passport... OK</div>
<div class="t" style="left:14px;top:561px;font-size:12.9px;letter-spacing:0.15px;color:#000;">13:19:00</div>
<div class="t" style="left:79px;top:561px;font-size:12.85px;letter-spacing:-0.113px;color:#000;white-space:nowrap;">Model: ST3250410AS; Capacity: 488395055 LBAs; SN: 6RYBXA5J; FW: 3.AAF</div>
<div class="t" style="left:14px;top:578px;font-size:12.9px;letter-spacing:0.15px;color:#000;">13:19:04</div>
<div class="t" style="left:79px;top:578px;font-size:12.85px;letter-spacing:-0.007px;color:#0000ff;white-space:nowrap;">Get S.M.A.R.T. command... OK</div>
<div class="t" style="left:14px;top:595px;font-size:12.9px;letter-spacing:0.15px;color:#000;">13:19:04</div>
<div class="t" style="left:79px;top:595px;font-size:12.85px;letter-spacing:-0.261px;color:#0000ff;white-space:nowrap;">SMART status = GOOD</div>
<div class="" style="left:8px;top:623px;width:673px;height:17px;background:#ececec;"></div>
<svg class="a" style="left:13px;top:627px" width="6" height="8"><path d="M5 0 L5 8 L1 4Z" fill="#404040"/></svg>
<svg class="a" style="left:670px;top:627px" width="6" height="8"><path d="M0 0 L0 8 L4 4Z" fill="#404040"/></svg>
<div class="" style="left:26px;top:624px;width:495px;height:14px;background:linear-gradient(#f6f6f6,#eaeaea 50%,#d8d8d8);border:1px solid #9a9a9a;border-radius:2px;box-sizing:border-box;"></div>
<div class="" style="left:269px;top:627px;width:1px;height:8px;background:#505050;"></div>
<div class="" style="left:270px;top:627px;width:1px;height:8px;background:#fafafa;"></div>
<div class="" style="left:272px;top:627px;width:1px;height:8px;background:#505050;"></div>
<div class="" style="left:273px;top:627px;width:1px;height:8px;background:#fafafa;"></div>
<div class="" style="left:275px;top:627px;width:1px;height:8px;background:#505050;"></div>
<div class="" style="left:276px;top:627px;width:1px;height:8px;background:#fafafa;"></div>
<div class="" style="left:755px;top:28px;width:1px;height:613px;background:#101040;"></div>
<div class="" style="left:756px;top:27px;width:1px;height:615px;background:#b0b0e0;"></div>
<div class="rstrip" style="top:28px;height:618px;background:linear-gradient(#4040c8 0px,#6a70c8 72px,#4048a0 172px,#303080 322px,#303068 472px,#10103a 618px);"></div>
<div class="" style="left:761px;top:20px;width:1px;height:627px;background:#b0b0e0;"></div>
<div class="" style="left:762px;top:20px;width:1px;height:628px;background:#000020;"></div>
</body></html>
